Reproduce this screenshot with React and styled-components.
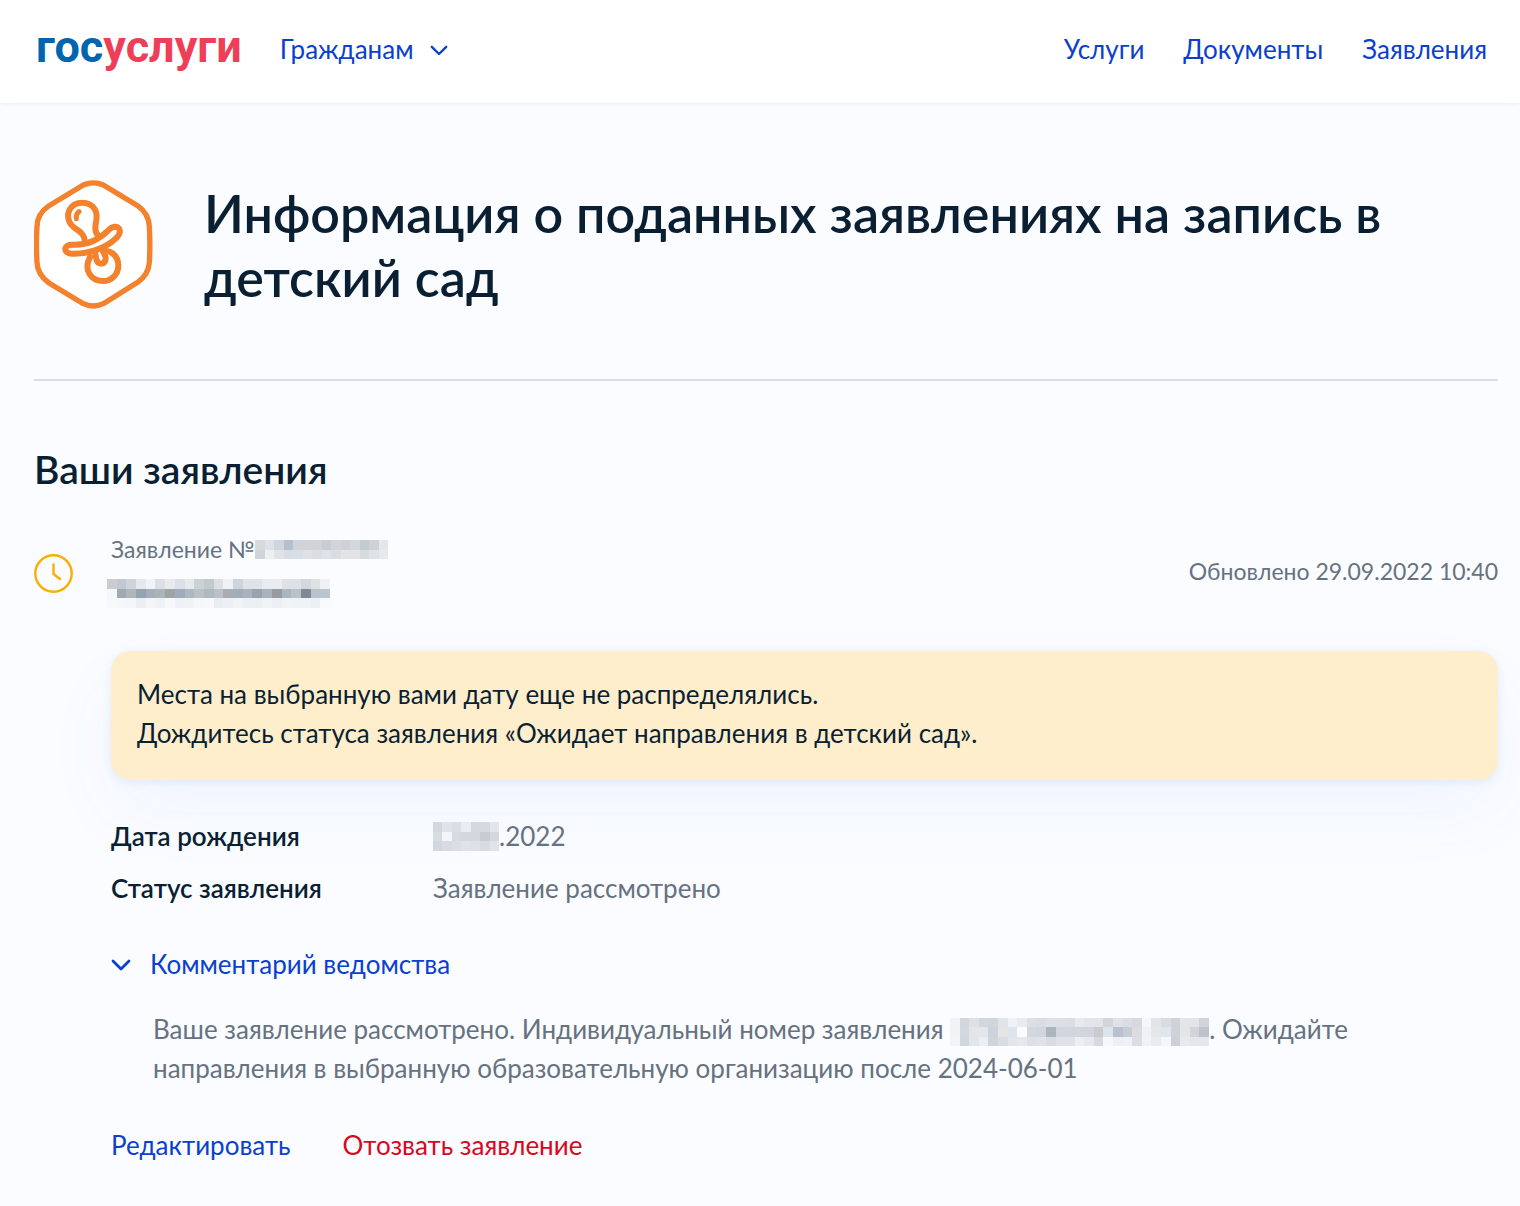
import React, { useState } from 'react'
import styled, { createGlobalStyle, css } from 'styled-components'

const colors = {
  link: '#0b40cf',
  danger: '#d8081e',
  text: '#0b1f33',
  muted: '#66727f',
  orange: '#f4812c',
  amber: '#fbad00',
  page: '#fafcff'
}

const GlobalStyle = createGlobalStyle`
  body {
    margin: 0;
    background: ${colors.page};
    color: ${colors.text};
    font-family: Lato, 'Open Sans', sans-serif;
    font-size: 26px;
    line-height: 39px;
  }

  h1, h2, p, dl, dt, dd {
    margin: 0;
  }
`

const linkStyle = css`
  padding: 0;
  border: 0;
  background: none;
  color: ${props => (props.$danger ? colors.danger : colors.link)};
  font: inherit;
  text-decoration: none;
  cursor: pointer;
`

const TextLink = styled.a`
  ${linkStyle}
`

const TextButton = styled.button`
  ${linkStyle}
  display: inline-flex;
  align-items: center;
  gap: ${props => props.$gap || '0'};
`

const SiteHeader = styled.header`
  display: flex;
  align-items: flex-start;
  gap: 38px;
  padding: 30px 33px 34px 36px;
  background: white;
  box-shadow: 0 1px 4px #e6edf7;
`

const Logo = styled.a`
  color: #ee3f58;
  font-family: Roboto, sans-serif;
  font-size: 45px;
  font-weight: 700;
  line-height: 34px;
  text-decoration: none;
`

const LogoStart = styled.span`
  color: #0065b1;
`

const Nav = styled.nav`
  display: flex;
  gap: 39px;
  margin-left: auto;
`

const Main = styled.main`
  padding: 76px 22px 40px 34px;
`

const TitleRow = styled.div`
  display: flex;
  align-items: center;
  gap: 50px;
  padding-bottom: 69px;
  border-bottom: 2px solid #d9dde4;

  svg {
    flex: none;
  }
`

const Title = styled.h1`
  font-size: 52px;
  font-weight: 600;
  line-height: 64px;
`

const SectionTitle = styled.h2`
  margin-top: 62px;
  font-size: 39px;
  font-weight: 600;
  line-height: 52px;
`

const Application = styled.article`
  display: grid;
  grid-template-columns: 39px 1fr;
  column-gap: 38px;
  align-items: center;
  margin-top: 38px;
`

const StatusIcon = styled.div`
  display: flex;
  padding-top: 6px;
`

const Summary = styled.div`
  display: flex;
  align-items: center;
  justify-content: space-between;
`

const Caption = styled.p`
  display: flex;
  align-items: center;
  color: ${colors.muted};
  font-size: 23px;
  line-height: 32px;
`

const Applicant = styled.div`
  display: flex;
  margin: 14px 0 0 -4px;
`

const Details = styled.div`
  grid-column: 2;
`

const Notice = styled.p`
  margin-top: 43px;
  padding: 24px 26px 27px;
  border-radius: 20px;
  background: #ffeecb;
  box-shadow: 0 2px 8px rgba(40, 100, 220, 0.1), 0 32px 72px rgba(70, 120, 210, 0.05);
`

const Facts = styled.dl`
  display: grid;
  grid-template-columns: 322px 1fr;
  row-gap: 13px;
  margin-top: 37px;
`

const Term = styled.dt`
  font-weight: 600;
`

const Value = styled.dd`
  display: flex;
  align-items: center;
  color: ${colors.muted};
`

const Comment = styled.section`
  margin-top: 34px;
`

const CommentText = styled.p`
  margin-top: 26px;
  padding: 0 100px 0 42px;
  color: ${colors.muted};

  svg {
    vertical-align: middle;
  }
`

const Actions = styled.div`
  display: flex;
  gap: 52px;
  margin-top: 38px;
`

const MosaicSvg = styled.svg`
  display: inline-block;
  flex: none;
  shape-rendering: crispEdges;
`

// every row is a string of colours, one per cell
const Mosaic = ({ rows, width, height }) => {
  const cells = rows.map(row => row.split(' '))
  const cols = cells[0].length
  return (
    <MosaicSvg
      width={width}
      height={height}
      viewBox={`0 0 ${cols} ${cells.length}`}
      preserveAspectRatio="none"
      aria-hidden="true"
    >
      {cells.map((row, y) =>
        row.map((fill, x) => (
          <rect key={`${x}-${y}`} x={x} y={y} width="1" height="1" fill={`#${fill}`} />
        ))
      )}
    </MosaicSvg>
  )
}

const numberCells = [
  'd8d9dd dde2ea d0d5dc b5c0cf d0d3d8 d0d3d8 d0d3d9 c8ccd5 d2d4da ced1d8 d3d7e0 c5cccf cdd2d6 e4e7eb',
  'cfd3da eceff3 dfe2e7 d8dce4 d9dde5 dfe1e3 dadde2 dfe2e8 dadde2 e3e4e6 e3e4e7 d8dbde dfe2e6 e6e9ee'
]

const nameCells = [
  'cbcbd2 c2c7d1 cfd3da e4e9ee f1f3f7 dadfe8 e9eaee dae0e8 e6e9ee cad2d4 c3cacc dedfe5 eff1f6 cfd3dc dfe3e9 dfe3e9 e8ebef e9ecf0 dee2e7 dee1e6 d3d8de dfe2e5 eef2f6',
  'f6f7f9 a1a9b6 b1b6ba 93a3b1 a4afb9 aab4b9 9fa3a3 9dabbd aeb8c3 bac2c5 afb9c3 bbc0c9 a9adb3 a1adbd aab2bf 9aa2ad a7b3bf 979b9f abb5c0 bac2c9 808795 b9c2cd bcc4cf',
  'f6f8fa f5f8fb f4f6f9 ebeff3 f3f5f8 eef1f5 f6f8fa eef2f6 eff3f6 f5f7fa f6f8fb e9edf2 ecf0f5 f1f4f7 ecf0f5 ecf0f5 f1f4f7 ecf0f5 f1f4f7 eff2f6 eff2f6 ecf0f4 f7f9fb'
]

const dayCells = [
  'd3d7df e0e3e8 dadde3 e9ecf1 d4d8df d6d9e0 e2e6eb',
  'd7dbe2 f3f5f8 d6dae1 d3d8df d3d7df c8cbd2 d3d8de',
  'd2d6de d8dbe2 dbdee5 dfe2e8 dde0e6 d8dbe2 e0e3e8'
]

const idCells = [
  'f2f3f5 d1d6df dee0e4 d3d6dd d0d6de e1e4e9 edf2fa e9ebef dcdfe4 d9dce2 dde0e6 dce0e5 dadde3 e6e9ee e2e5ea e1e4e8 d2d5dc dfe2e7 dadde3 d6d9e0 f4f7fc e1e4e9 d8dce3 cfd2d9 e3e6e9 e1e4e9 d0d3da',
  'f1f3f6 d1d8df e5e5e6 e1e7ee ced3db e5e5e6 dce5ed fafbfc d3d7df d1d5dd adb5bf d1d5dd d2d5dd d1d5dd d2d5dd c9cbce dce5ed b8c1cd c4ccd5 dadce1 eef1f5 e4e6e9 dfe6ed cfd2d9 e2e5e9 d1d4db bec3ca',
  'f1f4f8 cfd7e0 e1e6ec ebeef2 cfd4dd d9dce2 e3e5ea e6e8ec dde1e7 dfe2e8 d9dce2 dfe2e7 dfe2e8 eceef2 e6e8ed d6d9df f6f8fb eceff4 eef1f6 dadde3 f0f2f5 e9ebef f4f6f9 cdd0d8 e7e9ed e3e6eb e4e7eb'
]

const PacifierIcon = () => (
  <svg width="120" height="131" viewBox="42 28 360 393" fill="none" stroke={colors.orange} strokeWidth="16" strokeLinecap="round" strokeLinejoin="round" aria-hidden="true">
    <path fill="white" d="M190 46Q220 33 250 46L353 108Q386 132 388 170C390 204 390 245 388 278Q386 314 353 338L250 402Q220 416 190 402L87 340Q52 314 51 278C49 245 49 204 51 170Q52 132 87 108Z" />
    <path strokeWidth="18" d="M194 212C192 191 177 185 162 173C141 157 141 132 150 118C165 93 208 93 224 118C238 142 225 155 226 175C226 185 229 192 234 197" />
    <path strokeWidth="18" d="M155 225C200 228 235 212 265 182C278 168 292 168 298 178C303 188 297 196 290 204C258 236 205 254 155 252C129 250 129 226 155 225Z" />
    <path strokeWidth="18" d="M210 262C190 300 212 334 249 334A46 46 0 0 0 295 288C295 262 278 245 258 244" />
    <path strokeWidth="18" d="M226 253L229 268C233 287 254 286 257 268C258 260 253 254 248 244" />
    <path strokeWidth="15" d="M177 126C168 132 168 139 169 147" />
  </svg>
)

const ClockIcon = () => (
  <svg width="39" height="39" viewBox="0 0 39 39" fill="none" stroke={colors.amber} strokeWidth="2.4" strokeLinecap="round" strokeLinejoin="round" role="img" aria-label="В обработке">
    <circle cx="19.5" cy="19.5" r="18.2" />
    <path d="M19.5 10.5v9.5l6.5 5" />
  </svg>
)

const Chevron = ({ width, stroke = 2 }) => (
  <svg width={width} height={width / 2 + 4} viewBox="0 0 20 14" fill="none" stroke="currentColor" strokeWidth={stroke} strokeLinecap="round" strokeLinejoin="round" aria-hidden="true">
    <path d="M2 4l8 8 8-8" />
  </svg>
)

const App = () => {
  const [open, setOpen] = useState(true)

  return (
    <>
      <GlobalStyle />
      <SiteHeader>
        <Logo href="#"><LogoStart>гос</LogoStart>услуги</Logo>
        <TextButton type="button" $gap="17px">
          Гражданам
          <Chevron width={18} stroke={2.6} />
        </TextButton>
        <Nav>
          <TextLink href="#services">Услуги</TextLink>
          <TextLink href="#documents">Документы</TextLink>
          <TextLink href="#applications">Заявления</TextLink>
        </Nav>
      </SiteHeader>
      <Main>
        <TitleRow>
          <PacifierIcon />
          <Title>Информация о поданных заявлениях на запись в детский сад</Title>
        </TitleRow>
        <SectionTitle>Ваши заявления</SectionTitle>
        <Application>
          <StatusIcon><ClockIcon /></StatusIcon>
          <Summary>
            <div>
              <Caption>Заявление №<Mosaic rows={numberCells} width={133} height={19} /></Caption>
              <Applicant><Mosaic rows={nameCells} width={223} height={29} /></Applicant>
            </div>
            <Caption>Обновлено 29.09.2022 10:40</Caption>
          </Summary>
          <Details>
            <Notice>
              Места на выбранную вами дату еще не распределялись.<br />
              Дождитесь статуса заявления «Ожидает направления в детский сад».
            </Notice>
            <Facts>
              <Term>Дата рождения</Term>
              <Value><Mosaic rows={dayCells} width={66} height={29} />.2022</Value>
              <Term>Статус заявления</Term>
              <Value>Заявление рассмотрено</Value>
            </Facts>
            <Comment>
              <TextButton type="button" $gap="19px" aria-expanded={open} onClick={() => setOpen(!open)}>
                <Chevron width={20} stroke={2.8} />
                Комментарий ведомства
              </TextButton>
              {open && (
                <CommentText>
                  Ваше заявление рассмотрено. Индивидуальный номер заявления{' '}
                  <Mosaic rows={idCells} width={259} height={28} />. Ожидайте направления в выбранную
                  образовательную организацию после 2024-06-01
                </CommentText>
              )}
            </Comment>
            <Actions>
              <TextLink href="#edit">Редактировать</TextLink>
              <TextButton type="button" $danger>Отозвать заявление</TextButton>
            </Actions>
          </Details>
        </Application>
      </Main>
    </>
  )
}

export default App
